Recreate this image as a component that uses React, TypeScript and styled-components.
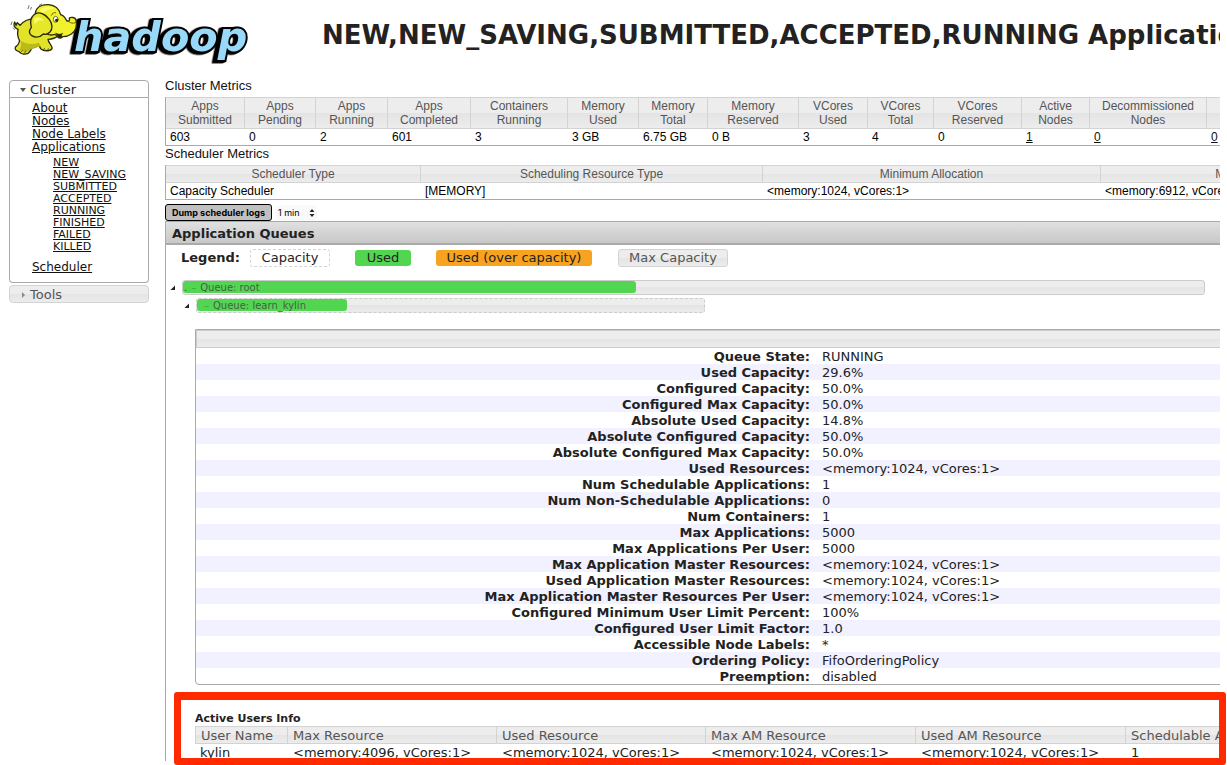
import React from 'react';
import styled, { createGlobalStyle, css } from 'styled-components';

const GlobalStyle = createGlobalStyle`
  * { box-sizing: border-box; }
  body {
    margin: 0;
    background: #fff;
    color: #222;
    font-family: "DejaVu Sans", Verdana, sans-serif;
    font-size: 13px;
    line-height: 16px;
    overflow: hidden;
  }
`;

const helvetica = '"Liberation Sans", Helvetica, Arial, sans-serif';
const greyBar = 'linear-gradient(#ededed 0 50%, #e4e4e4 50%, #ececec)';

const Page = styled.div`
  margin-right: 7px;
  overflow-x: clip;
`;

const Header = styled.header`
  display: flex;
  align-items: center;
  height: 70px;
`;

const Logo = styled.svg`
  flex: none;
  width: 260px;
  height: 70px;
`;

const Wordmark = styled.text`
  font: italic bold 124px "DejaVu Sans", sans-serif;
  fill: #98d8f8;
  stroke: #000;
  stroke-width: 12px;
  stroke-linejoin: miter;
  paint-order: stroke;
  filter: drop-shadow(-6px 2px 0 #000) drop-shadow(-4px 2px 0 #000);
`;

const Title = styled.h1`
  margin: 0;
  padding-left: 62px;
  font-size: 26px;
  line-height: 32px;
  white-space: nowrap;
`;

const Columns = styled.div`
  display: flex;
  align-items: flex-start;
`;

const Sidebar = styled.nav`
  flex: none;
  width: 140px;
  margin: 10px 16px 0 9px;
`;

const SideHead = styled.h3<{ $open?: boolean }>`
  display: flex;
  align-items: center;
  gap: 4px;
  height: 18px;
  margin: 0;
  padding: 1px 0 0 10px;
  border: 1px solid ${p => (p.$open ? '#aaa' : '#d3d3d3')};
  border-radius: ${p => (p.$open ? '4px 4px 0 0' : '4px')};
  background: ${p => (p.$open ? '#fff' : greyBar)};
  color: ${p => (p.$open ? '#212121' : '#555')};
  font-size: 13px;
  font-weight: normal;
`;

const SideBody = styled.div`
  height: 185px;
  margin-bottom: 2px;
  padding: 4px 0 0 22px;
  border: 1px solid #aaa;
  border-top: 0;
  border-radius: 0 0 4px 4px;
`;

const LinkList = styled.ul<{ $sub?: boolean }>`
  margin: 0;
  padding: 0;
  list-style: none;
  font-size: 12px;
  line-height: 13px;
  ${p => p.$sub && css`
    margin: 3px 0 8px 21px;
    font-size: 11px;
    line-height: 12px;
  `}
`;

const Link = styled.a`
  color: #111;
  text-decoration: underline;
`;

const Main = styled.main`
  flex: 1;
  min-width: 1272px;
  padding-top: 7px;
`;

const Caption = styled.div`
  height: 20px;
  padding-top: 1px;
  color: #111;
  font: 13px/16px ${helvetica};
`;

const MetricsTable = styled.table`
  width: 100%;
  table-layout: fixed;
  border-collapse: separate;
  border-spacing: 0;
  border-left: 1px solid #aaa;
  border-bottom: 1px solid #aaa;
  font: 12px/14px ${helvetica};
  color: #000;

  & + ${Caption} { height: 19px; padding-top: 0; }

  th {
    height: 17px;
    padding: 1px 4px;
    border: solid #d3d3d3;
    border-width: 1px 1px 1px 0;
    background: ${greyBar};
    color: #555;
    font-weight: normal;
    white-space: pre-line;
  }
  td { height: 16px; padding: 1px 4px; white-space: nowrap; }
`;

const Toolbar = styled.div`
  display: flex;
  align-items: center;
  gap: 4px;
  height: 21px;
  padding-top: 4px;
`;

const DumpButton = styled.button`
  width: 107px;
  height: 17px;
  padding: 0;
  border: 1px solid #000;
  border-radius: 3px;
  background: #c0c0c0;
  color: #000;
  font: bold 9px/13px Inter, sans-serif;
`;

const SelectBox = styled.label`
  position: relative;
  display: flex;
  svg { position: absolute; right: 2px; top: 4px; pointer-events: none; }
`;

const Select = styled.select`
  appearance: none;
  width: 41px;
  height: 15px;
  padding: 0 2px;
  border: 0;
  border-radius: 4px;
  background: #f9f9f9;
  color: #000;
  font: 9px/15px Inter, sans-serif;
`;

const Panel = styled.section`
  border-left: 1px solid #aaa;
`;

const PanelHead = styled.h2`
  height: 24px;
  margin: 0;
  padding-left: 6px;
  border-top: 1px solid #aaa;
  border-bottom: 2px solid #aaa;
  background: linear-gradient(#e0e0e0, #c8c8c8);
  font-size: 13px;
  line-height: 23px;
`;

const Legend = styled.div`
  display: flex;
  align-items: center;
  height: 26px;
  padding-left: 15px;
`;

const LegendLabel = styled.strong`
  width: 69px;
`;

type Kind = 'capacity' | 'used' | 'over' | 'max';

const kinds = {
  capacity: css`width: 80px; margin-right: 25px; border: 1px dashed #d3d3d3;`,
  used: css`width: 56px; margin-right: 25px; background: #52d652;`,
  over: css`width: 156px; margin-right: 26px; background: #f8a31f;`,
  max: css`width: 110px; border: 1px solid #d3d3d3; background: ${greyBar}; color: #555;`,
};

const LegendItem = styled.span<{ $kind: Kind }>`
  display: flex;
  align-items: center;
  justify-content: center;
  height: ${p => (p.$kind === 'used' || p.$kind === 'over' ? 16 : 18)}px;
  border-radius: 3px;
  ${p => kinds[p.$kind]}
`;

const Queues = styled.div`
  display: flex;
  flex-direction: column;
  gap: 3px;
  padding: 9px 0 16px 4px;
`;

const QueueRow = styled.div<{ $level: number }>`
  display: flex;
  align-items: center;
  gap: 6px;
  margin-left: ${p => p.$level * 14}px;
`;

const QueueBar = styled.div<{ $dashed?: boolean }>`
  width: ${p => (p.$dashed ? '40%' : '81%')};
  max-width: ${p => (p.$dashed ? '509px' : '1023px')};
  flex: 1 0 auto;
  height: 15px;
  border: 1px ${p => (p.$dashed ? 'dashed' : 'solid')} #ccc;
  border-radius: 3px;
  background: ${greyBar};
`;

const QueueFill = styled.div<{ $level: number }>`
  display: flex;
  gap: 4px;
  height: 12px;
  padding-left: ${p => (p.$level ? 7 : 1)}px;
  border-radius: 3px;
  background: #52d652;
  color: #4a5c4a;
  font-size: 10px;
  line-height: 13px;
  white-space: nowrap;
  i { color: #38ac38; font-style: normal; }
`;

const InfoTable = styled.table`
  width: calc(100% - 29px);
  margin-left: 29px;
  table-layout: fixed;
  border-collapse: separate;
  border-spacing: 0;
  border: 1px solid #aaa;
  border-radius: 0 0 0 4px;
  color: #222;

  thead th {
    height: 18px;
    padding: 0;
    border: 1px solid #ccc;
    background: ${greyBar};
  }
  tbody th, tbody td { height: 16px; padding: 2px 6px 0; line-height: 14px; white-space: nowrap; }
  tbody th { text-align: right; }
  tbody td { text-align: left; }
  tbody tr:nth-child(even) { background: #f1f1ff; }
`;

const Users = styled.div`
  height: 76px;
  padding: 26px 0 0 29px;
`;

const UsersTitle = styled.h4`
  margin: 0;
  font-size: 11px;
  line-height: 15px;
`;

const UsersTable = styled.table`
  width: 100%;
  table-layout: fixed;
  border-collapse: separate;
  border-spacing: 0;
  color: #222;
  th {
    height: 18px;
    padding: 1px 5px 0;
    border: solid #d3d3d3;
    border-width: 1px 1px 1px 0;
    background: ${greyBar};
    color: #555;
    font-weight: normal;
    line-height: 15px;
    text-align: left;
    white-space: nowrap;
  }
  th:first-child { border-left-width: 1px; }
  td { padding: 1px 5px 0; line-height: 16px; white-space: nowrap; }
`;

const Frame = styled.div`
  position: fixed;
  left: 174px;
  right: 1px;
  top: 692px;
  height: 73px;
  border: 7px solid #ff2a00;
  border-top-width: 8px;
  border-radius: 3px;
  pointer-events: none;
`;

const clusterCols: [string, string, number, boolean?][] = [
  ['Apps\nSubmitted', '603', 79],
  ['Apps\nPending', '0', 71],
  ['Apps\nRunning', '2', 72],
  ['Apps\nCompleted', '601', 83],
  ['Containers\nRunning', '3', 97],
  ['Memory\nUsed', '3 GB', 71],
  ['Memory\nTotal', '6.75 GB', 69],
  ['Memory\nReserved', '0 B', 91],
  ['VCores\nUsed', '3', 69],
  ['VCores\nTotal', '4', 66],
  ['VCores\nReserved', '0', 88],
  ['Active\nNodes', '1', 68, true],
  ['Decommissioned\nNodes', '0', 117, true],
  ['', '0', 230, true],
];

const schedulerCols: [string, string, number][] = [
  ['Scheduler Type', 'Capacity Scheduler', 255],
  ['Scheduling Resource Type', '[MEMORY]', 342],
  ['Minimum Allocation', '<memory:1024, vCores:1>', 338],
  ['Maximum Allocation', '<memory:6912, vCores:4>', 336],
];

const states = ['NEW', 'NEW_SAVING', 'SUBMITTED', 'ACCEPTED', 'RUNNING', 'FINISHED', 'FAILED', 'KILLED'];

const info = [
  ['Queue State', 'RUNNING'],
  ['Used Capacity', '29.6%'],
  ['Configured Capacity', '50.0%'],
  ['Configured Max Capacity', '50.0%'],
  ['Absolute Used Capacity', '14.8%'],
  ['Absolute Configured Capacity', '50.0%'],
  ['Absolute Configured Max Capacity', '50.0%'],
  ['Used Resources', '<memory:1024, vCores:1>'],
  ['Num Schedulable Applications', '1'],
  ['Num Non-Schedulable Applications', '0'],
  ['Num Containers', '1'],
  ['Max Applications', '5000'],
  ['Max Applications Per User', '5000'],
  ['Max Application Master Resources', '<memory:1024, vCores:1>'],
  ['Used Application Master Resources', '<memory:1024, vCores:1>'],
  ['Max Application Master Resources Per User', '<memory:1024, vCores:1>'],
  ['Configured Minimum User Limit Percent', '100%'],
  ['Configured User Limit Factor', '1.0'],
  ['Accessible Node Labels', '*'],
  ['Ordering Policy', 'FifoOrderingPolicy'],
  ['Preemption', 'disabled'],
];

const userCols: [string, string, number][] = [
  ['User Name', 'kylin', 93],
  ['Max Resource', '<memory:4096, vCores:1>', 209],
  ['Used Resource', '<memory:1024, vCores:1>', 209],
  ['Max AM Resource', '<memory:1024, vCores:1>', 210],
  ['Used AM Resource', '<memory:1024, vCores:1>', 210],
  ['Schedulable Apps', '1', 311],
];

const HadoopLogo = () => (
  <Logo viewBox="0 0 780 210" role="img" aria-label="hadoop">
    <Wordmark x="222" y="154">hadoop</Wordmark>
    <g transform="translate(24 0)" stroke="#2b2b08" strokeWidth="4" strokeLinejoin="round" strokeLinecap="round">
      <path fill="#e2e22a" d="M30 88C20 84 14 76 20 66l4 10 4-8 8 8c10-12 26-20 46-20l70 50c-8 8-22 12-32 12 2 14 14 18 12 28-4 8-24 8-32 2-4-4-4-8-8-12-8 6-14 8-22 8 0 8-6 12-10 16-10 4-22 2-28-6-8-2-12-6-10-12 8-8 14-12 12-22-6-10-6-20-4-30Z" />
      <path fill="#baba1a" stroke="none" d="M36 120c14 12 36 16 56 8l6 10c-12 6-28 6-36 14-8 6-22 4-28-4 8-8 6-16 2-28Z" />
      <path fill="#f1f12e" d="M82 40c2-18 18-27 40-26 20 2 32 14 36 30 8 2 14 10 18 18 6 4 10 0 8-8 6-4 18-2 20 6 4 18-2 34-14 42-8 6-18 8-26 8-4 6-10 6-16 0-4-6-8-8-12-6-12 4-28-4-34-16Z" />
      <path fill="#e6e62a" d="M78 44c14-12 34-2 46 14 10 14 10 30 2 38-6 6-14 8-20 6-10 10-24 12-36 4-10-8-6-16 0-24-4-14-4-28 8-38Z" />
      <path fill="#fafa6a" stroke="none" d="M94 34c6-14 32-18 46-8-16 0-26 6-34 14ZM78 56c10-8 22-4 30 6-14-4-22 0-28 12Z" />
      <path fill="#1f1f08" strokeWidth="2" d="M144 100c6 4 14 4 20 0-4 4-4 8-2 12-6 4-14-2-18-12Z" />
      <path fill="none" strokeWidth="2" d="M60 26l3-9M68 28l2-6M94 16l7-4M12 66l-3 8M16 84l3 4M38 157l5-5M50 159l3-6M106 151l4-6M118 152l3-6M184 66c5 4 12 5 18 2M130 46c2-6 8-9 13-8" />
      <ellipse cx="143" cy="58" rx="7" ry="9" fill="#fff" strokeWidth="2" />
      <circle cx="146" cy="61" r="3" fill="#222" />
    </g>
  </Logo>
);

const Caret = ({ d, color = '#888' }: { d: string; color?: string }) => (
  <svg width="6" height="6" viewBox="0 0 6 6" aria-hidden="true"><path d={d} fill={color} /></svg>
);

const Fold = () => <Caret d="M5 0.500V5H0.500Z" color="#222" />;

export default function App() {
  return (
    <Page>
      <GlobalStyle />
      <Header>
        <HadoopLogo />
        <Title>NEW,NEW_SAVING,SUBMITTED,ACCEPTED,RUNNING Applications</Title>
      </Header>
      <Columns>
        <Sidebar>
          <SideHead $open><Caret d="M0 1H6L3 5Z" color="#555" />Cluster</SideHead>
          <SideBody>
            <LinkList>
              {['About', 'Nodes', 'Node Labels', 'Applications'].map(t => <li key={t}><Link href="#">{t}</Link></li>)}
            </LinkList>
            <LinkList $sub>
              {states.map(t => <li key={t}><Link href="#">{t}</Link></li>)}
            </LinkList>
            <LinkList><li><Link href="#">Scheduler</Link></li></LinkList>
          </SideBody>
          <SideHead><Caret d="M2 0V6L5 3Z" />Tools</SideHead>
        </Sidebar>
        <Main>
          <Caption>Cluster Metrics</Caption>
          <MetricsTable>
            <colgroup>{clusterCols.map((c, i) => <col key={i} width={c[2]} />)}</colgroup>
            <thead><tr>{clusterCols.map((c, i) => <th key={i}>{c[0]}</th>)}</tr></thead>
            <tbody><tr>{clusterCols.map((c, i) => <td key={i}>{c[3] ? <Link href="#">{c[1]}</Link> : c[1]}</td>)}</tr></tbody>
          </MetricsTable>
          <Caption>Scheduler Metrics</Caption>
          <MetricsTable>
            <colgroup>{schedulerCols.map(c => <col key={c[0]} width={c[2]} />)}</colgroup>
            <thead><tr>{schedulerCols.map(c => <th key={c[0]}>{c[0]}</th>)}</tr></thead>
            <tbody><tr>{schedulerCols.map(c => <td key={c[0]}>{c[1]}</td>)}</tr></tbody>
          </MetricsTable>
          <Toolbar>
            <DumpButton type="button">Dump scheduler logs</DumpButton>
            <SelectBox>
              <Select aria-label="Log duration"><option>1 min</option></Select>
              <svg width="6" height="8" viewBox="0 0 6 8" aria-hidden="true"><path d="M3 0L5.500 3H0.500ZM3 8L5.500 5H0.500Z" fill="#222" /></svg>
            </SelectBox>
          </Toolbar>
          <Panel>
            <PanelHead>Application Queues</PanelHead>
            <Legend>
              <LegendLabel>Legend:</LegendLabel>
              <LegendItem $kind="capacity">Capacity</LegendItem>
              <LegendItem $kind="used">Used</LegendItem>
              <LegendItem $kind="over">Used (over capacity)</LegendItem>
              <LegendItem $kind="max">Max Capacity</LegendItem>
            </Legend>
            <Queues>
              <QueueRow $level={0}>
                <Fold />
                <QueueBar><QueueFill $level={0} style={{ width: '44.4%' }}>.<i>–</i> Queue: root</QueueFill></QueueBar>
              </QueueRow>
              <QueueRow $level={1}>
                <Fold />
                <QueueBar $dashed><QueueFill $level={1} style={{ width: '29.6%' }}><i>–</i> Queue: learn_kylin</QueueFill></QueueBar>
              </QueueRow>
            </Queues>
            <InfoTable>
              <thead><tr><th colSpan={2} /></tr></thead>
              <tbody>{info.map(([k, v]) => <tr key={k}><th scope="row">{k}:</th><td>{v}</td></tr>)}</tbody>
            </InfoTable>
            <Users>
              <UsersTitle>Active Users Info</UsersTitle>
              <UsersTable>
                <colgroup>{userCols.map(c => <col key={c[0]} width={c[2]} />)}</colgroup>
                <thead><tr>{userCols.map(c => <th key={c[0]}>{c[0]}</th>)}</tr></thead>
                <tbody><tr>{userCols.map(c => <td key={c[0]}>{c[1]}</td>)}</tr></tbody>
              </UsersTable>
            </Users>
          </Panel>
        </Main>
      </Columns>
      <Frame />
    </Page>
  );
}
